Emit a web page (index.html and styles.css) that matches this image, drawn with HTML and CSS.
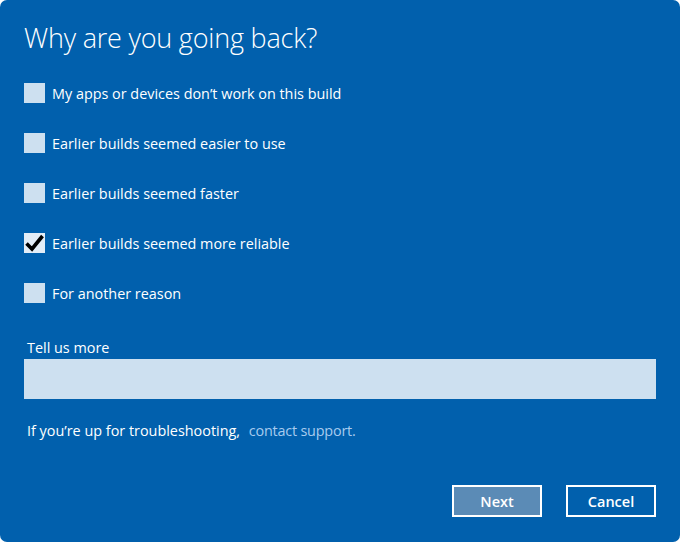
FILE: index.html
```html
<!DOCTYPE html>
<html>
<head>
<meta charset="utf-8">
<link rel="stylesheet" href="styles.css">
</head>
<body>
<div class="dialog">
  <h1 class="title">Why are you going back?</h1>
  <div class="options">
    <div class="option"><span class="box"></span><span class="label">My apps or devices don’t work on this build</span></div>
    <div class="option"><span class="box"></span><span class="label">Earlier builds seemed easier to use</span></div>
    <div class="option"><span class="box"></span><span class="label">Earlier builds seemed faster</span></div>
    <div class="option"><span class="box checked"><svg viewBox="0 0 21 20" width="21" height="20"><path d="M2.5 10.5 L8 16 L18.5 3" fill="none" stroke="#000" stroke-width="3.6"/></svg></span><span class="label">Earlier builds seemed more reliable</span></div>
    <div class="option"><span class="box"></span><span class="label">For another reason</span></div>
  </div>
  <div class="more">
    <div class="more-label">Tell us more</div>
    <div class="input"></div>
  </div>
  <div class="support">If you’re up for troubleshooting, <span class="link">contact support.</span></div>
  <div class="buttons">
    <div class="btn primary">Next</div>
    <div class="btn">Cancel</div>
  </div>
</div>
</body>
</html>
```
FILE: styles.css
```css
html, body {
  margin: 0;
  padding: 0;
  background: #ffffff;
}
.dialog {
  width: 680px;
  height: 542px;
  box-sizing: border-box;
  background: #0160ad;
  border-radius: 7px;
  padding: 20px 24px 0 24px;
  font-family: "Open Sans", "Noto Sans", sans-serif;
  color: #ffffff;
  display: flex;
  flex-direction: column;
}
.title {
  margin: 0;
  font-size: 27px;
  font-weight: 300;
  line-height: 36px;
  letter-spacing: -0.2px;
}
.options {
  margin-top: 27px;
  display: flex;
  flex-direction: column;
  gap: 30px;
}
.option {
  display: flex;
  align-items: center;
  height: 20px;
}
.box {
  width: 21px;
  height: 20px;
  background: #cde0f0;
  margin-right: 7px;
  display: flex;
  align-items: center;
  justify-content: center;
}
.box.checked {
  background: #e3edf7;
}
.label {
  font-size: 14.4px;
}
.more {
  margin-top: 36px;
}
.more-label {
  font-size: 14.4px;
  padding-left: 3px;
  line-height: 18px;
}
.input {
  margin-top: 2px;
  height: 40px;
  background: #cde0f0;
}
.support {
  margin-top: 22px;
  padding-left: 3px;
  font-size: 14.4px;
  line-height: 20px;
}
.link {
  color: #a8cbee;
  margin-left: 5px;
  letter-spacing: -0.2px;
}
.buttons {
  margin-top: 44px;
  display: flex;
  justify-content: flex-end;
  gap: 24px;
}
.btn {
  width: 90px;
  height: 32px;
  box-sizing: border-box;
  border: 2px solid #ffffff;
  display: flex;
  align-items: center;
  justify-content: center;
  font-size: 14.5px;
  font-weight: 600;
}
.btn.primary {
  background: #5b8bb6;
}
```
